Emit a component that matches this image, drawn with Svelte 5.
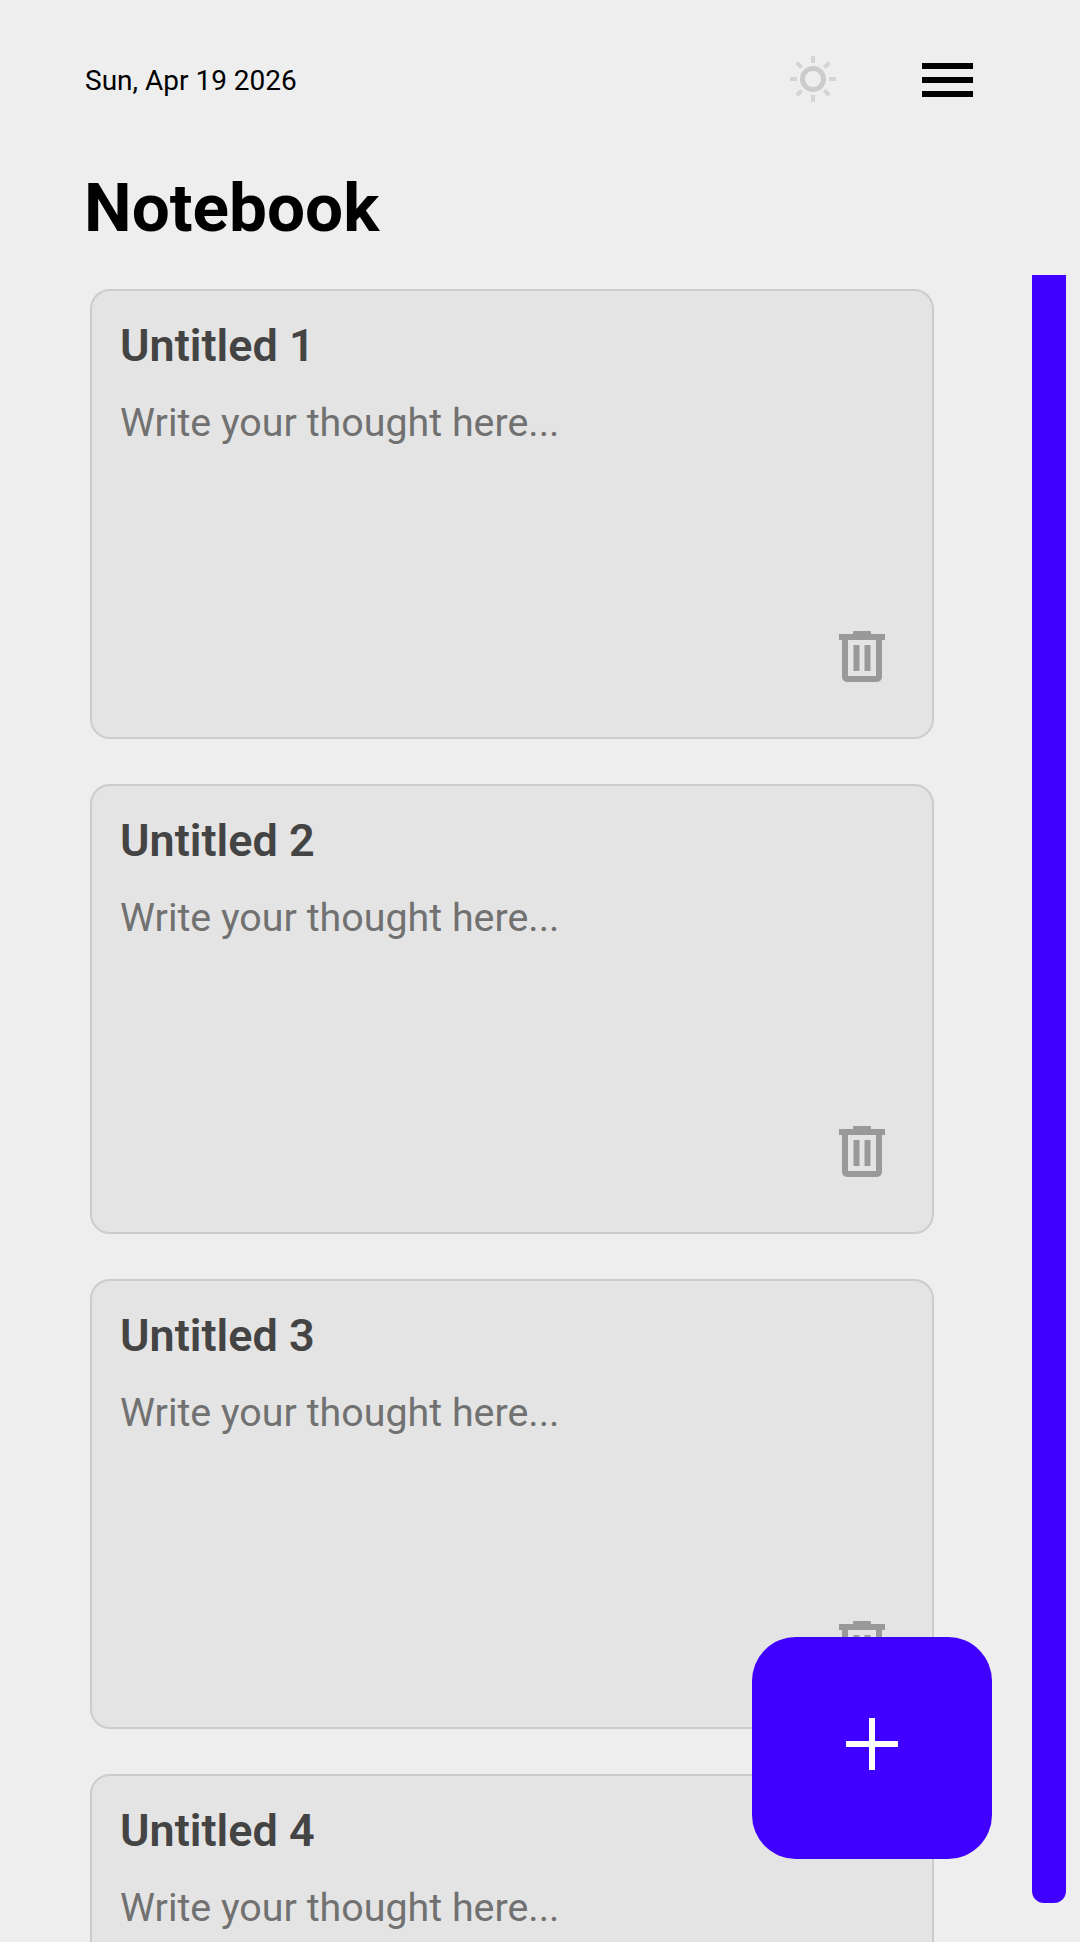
<script>
  // Notebook screen: header, list of notes, floating add button.
  let notes = $state([
    { id: 1, title: "Untitled 1" },
    { id: 2, title: "Untitled 2" },
    { id: 3, title: "Untitled 3" },
    { id: 4, title: "Untitled 4" },
  ]);
  const rays = [0, 45, 90, 135, 180, 225, 270, 315];

  function add() {
    const id = notes.length + 1;
    notes.push({ id, title: `Untitled ${id}` });
  }
  function remove(id) {
    notes = notes.filter((n) => n.id !== id);
  }
</script>

<div class="page">
  <header class="top">
    <span class="date">Sun, Apr 19 2026</span>
    <button class="sun" aria-label="Toggle theme">
      <svg width="48" height="48" viewBox="0 0 48 48">
        <circle cx="24" cy="24" r="10.5" fill="none" stroke="#ccc" stroke-width="5" />
        {#each rays as r}
          <rect x="22" y="1" width="4" height="7" fill="#d4d4d4" transform="rotate({r} 24 24)" />
        {/each}
      </svg>
    </button>
    <button class="menu" aria-label="Menu">
      <span></span><span></span><span></span>
    </button>
  </header>

  <h1>Notebook</h1>

  <div class="list">
    {#each notes as n (n.id)}
      <article class="card">
        <h2>{n.title}</h2>
        <p>Write your thought here...</p>
        <button class="trash" aria-label="Delete" onclick={() => remove(n.id)}>
          <svg width="46" height="51" viewBox="0 0 46 51" fill="#999">
            <rect x="14" y="0" width="18" height="4" rx="1" />
            <rect x="0" y="3" width="46" height="6" />
            <path d="M3 8h6v37h28V8h6v38a5 5 0 0 1-5 5H8a5 5 0 0 1-5-5z" />
            <rect x="14.5" y="14" width="6" height="26" />
            <rect x="25.5" y="14" width="6" height="26" />
          </svg>
        </button>
      </article>
    {/each}
  </div>

  <div class="scrollbar"></div>

  <button class="fab" aria-label="Add note" onclick={add}>
    <svg width="52" height="52" viewBox="0 0 52 52" fill="#fff">
      <rect x="23" y="0" width="6" height="52" />
      <rect x="0" y="23" width="52" height="6" />
    </svg>
  </button>
</div>

<style>
  :global(body) { margin: 0; background: #eee; overflow: hidden; }
  .page { position: relative; width: 1080px; height: 1942px; overflow: hidden; background: #eee; font-family: Roboto, "Liberation Sans", sans-serif; box-sizing: border-box; padding: 56px 0 0 85px; }
  button { background: none; border: none; padding: 0; cursor: pointer; display: block; }

  .top { display: flex; align-items: center; height: 48px; }
  .date { font-size: 28px; color: #000; width: 704px; }
  .sun { width: 48px; height: 48px; margin-bottom: 2px; }
  .menu { display: flex; flex-direction: column; gap: 8px; margin-left: 85px; width: 51px; }
  .menu span { height: 6px; background: #000; }

  h1 { margin: 66px 0 0 -1px; font-size: 67.5px; font-weight: 700; line-height: 76px; color: #000; }

  .list { display: flex; flex-direction: column; gap: 45px; width: 844px; margin: 43px 0 0 5px; }
  .card { box-sizing: border-box; height: 450px; flex: none; border: 2px solid #ccc; border-radius: 20px; background: #e4e4e4; padding: 30px 47px 55px 28px; display: flex; flex-direction: column; }
  h2 { margin: 0; font-size: 45px; font-weight: 600; line-height: 50px; color: #444; }
  p { margin: 27px 0 0; font-size: 39.4px; line-height: 50px; color: #717171; }
  .trash { margin-top: auto; align-self: flex-end; height: 51px; }

  .scrollbar { position: absolute; left: 1032px; top: 275px; width: 34px; height: 1628px; background: #4000ff; border-radius: 0 0 12px 12px; }
  .fab { position: absolute; left: 752px; top: 1637px; width: 240px; height: 222px; padding-bottom: 8px; border-radius: 44px; background: #4000ff; display: flex; align-items: center; justify-content: center; }
</style>
